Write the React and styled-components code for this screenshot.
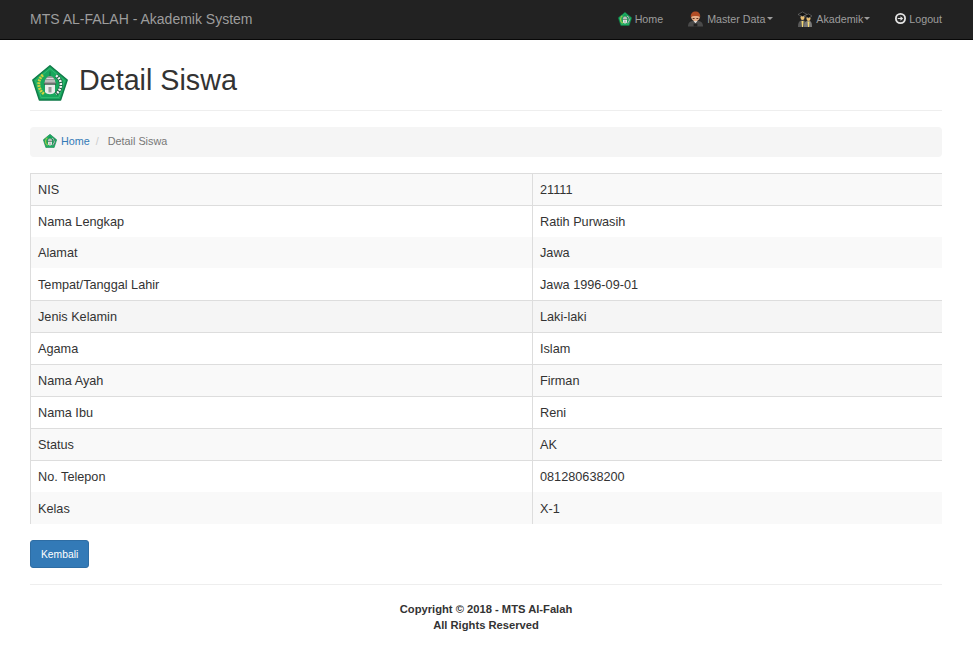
import React from 'react'
import styled, { createGlobalStyle } from 'styled-components'

const GlobalStyle = createGlobalStyle`
  html, body {
    margin: 0;
    padding: 0;
    background: #fff;
  }
  body {
    font-family: "Liberation Sans", Arial, sans-serif;
    font-size: 14px;
    color: #333;
  }
  * {
    box-sizing: border-box;
  }
`

const Navbar = styled.nav`
  display: flex;
  align-items: center;
  justify-content: space-between;
  height: 40px;
  padding: 0 31px 2px 30px;
  background: #222;
  border-bottom: 1px solid #080808;
`

const Brand = styled.a`
  font-size: 14px;
  color: #9d9d9d;
`

const NavList = styled.ul`
  display: flex;
  align-items: center;
  gap: 25px;
  margin: 0;
  padding: 0;
  list-style: none;
`

const NavItem = styled.li`
  display: flex;
  align-items: center;
  gap: ${({ $gap }) => $gap || 4}px;
  font-size: 10.7px;
  line-height: 16px;
  color: #9d9d9d;
`

const Caret = styled.span`
  width: 0;
  height: 0;
  margin-left: ${({ $offset }) => $offset}px;
  border-top: 3px solid #9d9d9d;
  border-left: 3px solid transparent;
  border-right: 3px solid transparent;
`

const Page = styled.main`
  padding: 0 31px 18px 30px;
`

const PageHeader = styled.header`
  display: flex;
  align-items: flex-start;
  gap: 11px;
  height: 71px;
  padding: 25px 0 0 2px;
  border-bottom: 1px solid #eee;
`

const Title = styled.h1`
  margin: 0;
  font-size: 28.7px;
  font-weight: 500;
  line-height: 30px;
`

const Breadcrumb = styled.ol`
  display: flex;
  align-items: center;
  height: 30px;
  margin: 16px 0;
  padding: 0 13px 2px;
  list-style: none;
  font-size: 10.8px;
  background: #f5f5f5;
  border-radius: 4px;
`

const Crumb = styled.li`
  display: flex;
  align-items: center;
  gap: 4px;
  color: #777;
`

const CrumbLink = styled.a`
  color: #337ab7;
`

const CrumbDivider = styled.span`
  padding: 0 9px 0 2px;
  color: #ccc;
`

const Table = styled.table`
  width: 100%;
  table-layout: fixed;
  border-collapse: separate;
  border-spacing: 0;
`

const Row = styled.tr`
  height: ${({ $short }) => ($short ? 31 : 32)}px;
  background: ${({ $tone }) => $tone || '#fff'};
`

const Cell = styled.td`
  width: ${({ $width }) => $width || 'auto'};
  padding: 1px 7px 0;
  font-size: 12.7px;
  line-height: 20px;
  border-left: 1px solid #ddd;
  border-top: ${({ $ruled }) => ($ruled ? '1px solid #ddd' : 'none')};
`

const BackButton = styled.button`
  display: block;
  height: 28px;
  margin-top: 16px;
  padding: 0 10px;
  font-family: inherit;
  font-size: 10.3px;
  color: #fff;
  background: #337ab7;
  border: 1px solid #2e6da4;
  border-radius: 3px;
`

const Footer = styled.footer`
  margin-top: 16px;
  padding-top: 16px;
  border-top: 1px solid #eee;
  font-size: 11.2px;
  font-weight: bold;
  line-height: 16px;
  text-align: center;
`

const LogoIcon = ({ size }) => (
  <svg width={size} height={size} viewBox="0 0 36 36">
    <path
      d="M18 .8 35.2 15 28.6 35H7.4L.8 15z"
      fill="#17a75c"
      stroke="#0f7a48"
      strokeWidth="1.4"
      strokeLinejoin="round"
    />
    <path
      d="M18 3.5 32.4 15.6 26.8 32.6H9.2L3.6 15.6z"
      fill="none"
      stroke="#3cc07a"
      strokeWidth=".8"
    />
    <path
      d="M11 10C5 15 5.500 24 12 29"
      fill="none"
      stroke="#cfd23f"
      strokeWidth="3"
      strokeDasharray="2 .8"
    />
    <path d="M24 10.500C30.500 15 30.500 24 24 29" fill="none" stroke="#14583a" strokeWidth="3.600" />
    <path
      d="M24 10.500C30.500 15 30.500 24 24 29"
      fill="none"
      stroke="#f2f2f2"
      strokeWidth="2.600"
      strokeDasharray="2 1"
    />
    <path d="M12.300 19C12.500 14 15 11 18 11s5.500 3 5.700 8z" fill="#9a9a9a" />
    <path d="M13 15.500h10v1H13zM14.500 13h7v1h-7z" fill="#dedede" />
    <path d="M12 18.500h12v1.200H12z" fill="#444" />
    <path d="M13 19.700h10V27c-2 3-8 3-10 0z" fill="#ececec" />
    <path d="M16.500 22h3v5.500h-3z" fill="#9a9a9a" />
    <path d="M17.700 6.500h.6V11h-.6z" fill="#0b4f2e" />
  </svg>
)

const PersonIcon = () => (
  <svg width="15" height="16" viewBox="0 0 16 16">
    <path d="M0 16c0-4 2-5.500 4.500-6h7c2.500.5 4.500 2 4.500 6z" fill="#4a4a4a" />
    <path d="M6 10h4l-2 2.500z" fill="#e6e6e6" />
    <ellipse cx="8" cy="6" rx="4.500" ry="4.500" fill="#e7b08a" />
    <path d="M3 6C2.500 2 5 0 8 0s5.500 2 5 6C11 4.500 5 4.500 3 6z" fill="#b14d25" />
    <path d="M5 7h2v1H5zM9 7h2v1H9z" fill="#5a3020" />
    <path d="M6 13h4v3H6z" fill="#222" />
  </svg>
)

const GraduatesIcon = () => (
  <svg width="14" height="16" viewBox="0 0 14 16">
    <path d="M0 16c0-4 1-6 3-6.500h3c1.500.5 2 3 2 6.500z" fill="#5a5a5a" />
    <path d="M6 16c0-4 1-5.500 3-6h3c1.500.5 2 2.500 2 6z" fill="#7a7a7a" />
    <path d="M3.500 10h2l-.5 6H4z" fill="#f3d774" />
    <path d="M9.500 10.500h2l-.5 5.500h-1z" fill="#f3d774" />
    <ellipse cx="4.500" cy="6.500" rx="2" ry="2.500" fill="#e9bf73" />
    <ellipse cx="10.500" cy="7.500" rx="2" ry="2.500" fill="#e9bf73" />
    <path d="M0 3.500 4.500 1 9 3.500 4.500 5.500z" fill="#111" stroke="#8a8a8a" strokeWidth=".5" />
    <path d="M6 5 10.500 3 14 5 10.500 7z" fill="#111" stroke="#8a8a8a" strokeWidth=".5" />
  </svg>
)

const LogoutIcon = () => (
  <svg width="11" height="11" viewBox="0 0 11 11">
    <circle cx="5.500" cy="5.500" r="5.500" fill="#e4e4e4" />
    <circle cx="5.500" cy="5.500" r="3.700" fill="#2a2a2a" />
    <path d="M2.800 5h2.700V3.200L8.200 5.500 5.500 7.800V6H2.800z" fill="#e4e4e4" />
  </svg>
)

const rows = [
  { label: 'NIS', value: '21111', tone: '#f9f9f9', ruled: true },
  { label: 'Nama Lengkap', value: 'Ratih Purwasih', ruled: true },
  { label: 'Alamat', value: 'Jawa', tone: '#f9f9f9', short: true },
  { label: 'Tempat/Tanggal Lahir', value: 'Jawa 1996-09-01' },
  { label: 'Jenis Kelamin', value: 'Laki-laki', tone: '#f5f5f5', ruled: true },
  { label: 'Agama', value: 'Islam', ruled: true },
  { label: 'Nama Ayah', value: 'Firman', tone: '#f9f9f9', ruled: true },
  { label: 'Nama Ibu', value: 'Reni', ruled: true },
  { label: 'Status', value: 'AK', tone: '#f9f9f9', ruled: true },
  { label: 'No. Telepon', value: '081280638200', ruled: true },
  { label: 'Kelas', value: 'X-1', tone: '#f9f9f9' },
]

const App = () => (
  <>
    <GlobalStyle />
    <Navbar>
      <Brand>MTS AL-FALAH - Akademik System</Brand>
      <NavList>
        <NavItem $gap={3}>
          <LogoIcon size={14} />
          Home
        </NavItem>
        <NavItem>
          <PersonIcon />
          Master Data
          <Caret $offset={-2} />
        </NavItem>
        <NavItem>
          <GraduatesIcon />
          Akademik
          <Caret $offset={-3} />
        </NavItem>
        <NavItem $gap={3}>
          <LogoutIcon />
          Logout
        </NavItem>
      </NavList>
    </Navbar>

    <Page>
      <PageHeader>
        <LogoIcon size={36} />
        <Title>Detail Siswa</Title>
      </PageHeader>

      <Breadcrumb>
        <Crumb>
          <LogoIcon size={14} />
          <CrumbLink>Home</CrumbLink>
          <CrumbDivider>/</CrumbDivider>
        </Crumb>
        <Crumb>Detail Siswa</Crumb>
      </Breadcrumb>

      <Table>
        <tbody>
          {rows.map(({ label, value, tone, ruled, short }) => (
            <Row key={label} $tone={tone} $short={short}>
              <Cell $ruled={ruled} $width="502px">
                {label}
              </Cell>
              <Cell $ruled={ruled}>{value}</Cell>
            </Row>
          ))}
        </tbody>
      </Table>

      <BackButton>Kembali</BackButton>

      <Footer>
        Copyright © 2018 - MTS Al-Falah
        <br />
        All Rights Reserved
      </Footer>
    </Page>
  </>
)

export default App
